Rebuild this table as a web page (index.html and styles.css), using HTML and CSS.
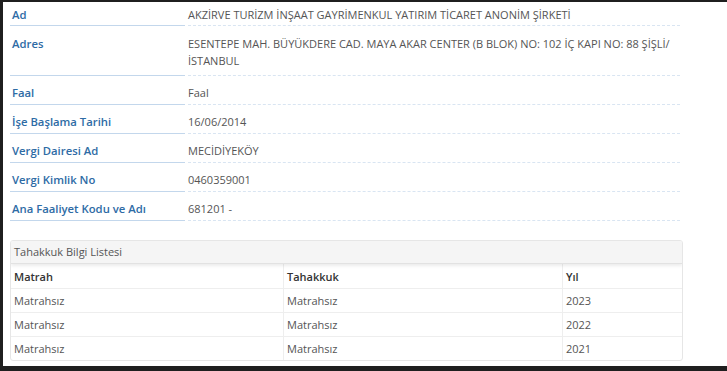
FILE: index.html
```html
<!DOCTYPE html>
<html lang="tr">
<head>
<meta charset="utf-8">
<link rel="stylesheet" href="styles.css">
</head>
<body>
<div class="frame">
  <div class="details">
    <div class="row first"><div class="label">Ad</div><div class="value">AKZİRVE TURİZM İNŞAAT GAYRİMENKUL YATIRIM TİCARET ANONİM ŞİRKETİ</div></div>
    <div class="row tall"><div class="label">Adres</div><div class="value">ESENTEPE MAH. BÜYÜKDERE CAD. MAYA AKAR CENTER (B BLOK) NO: 102 İÇ KAPI NO: 88 ŞİŞLİ/<br>İSTANBUL</div></div>
    <div class="row"><div class="label">Faal</div><div class="value">Faal</div></div>
    <div class="row"><div class="label">İşe Başlama Tarihi</div><div class="value">16/06/2014</div></div>
    <div class="row"><div class="label">Vergi Dairesi Ad</div><div class="value">MECİDİYEKÖY</div></div>
    <div class="row"><div class="label">Vergi Kimlik No</div><div class="value">0460359001</div></div>
    <div class="row"><div class="label">Ana Faaliyet Kodu ve Adı</div><div class="value">681201 -</div></div>
  </div>
  <div class="panel">
    <div class="panel-head">Tahakkuk Bilgi Listesi</div>
    <table class="grid">
      <thead>
        <tr><th class="c1">Matrah</th><th class="c2">Tahakkuk</th><th class="c3">Yıl</th></tr>
      </thead>
      <tbody>
        <tr><td>Matrahsız</td><td>Matrahsız</td><td>2023</td></tr>
        <tr><td>Matrahsız</td><td>Matrahsız</td><td>2022</td></tr>
        <tr><td>Matrahsız</td><td>Matrahsız</td><td>2021</td></tr>
      </tbody>
    </table>
  </div>
</div>
</body>
</html>
```
FILE: styles.css
```css
html, body {
  margin: 0;
  padding: 0;
  background: #1f1f1f;
  height: 371px;
  overflow: hidden;
}
.frame {
  margin: 2px 0 0 3px;
  height: 364px;
  background: #fff;
  font-family: "Open Sans", "Liberation Sans", sans-serif;
  box-sizing: border-box;
  padding: 0 43px 0 7px;
}
.details {
  display: flex;
  flex-direction: column;
}
.row {
  display: grid;
  grid-template-columns: 175px 492px;
  column-gap: 3px;
}
.label, .value {
  padding: 8px 0 3px;
  line-height: 17px;
}
.label {
  padding-left: 2px;
  font-size: 11.3px;
  font-weight: 600;
  color: #2e6ba5;
  border-bottom: 1px solid #c3d7ec;
}
.value {
  font-size: 11px;
  color: #555;
  border-bottom: 1px dashed #d9e5f2;
}
.row.first .label, .row.first .value {
  padding-top: 4px;
  padding-bottom: 2px;
}
.row.tall .label, .row.tall .value {
  padding-top: 9px;
  padding-bottom: 6px;
}
.panel {
  margin-top: 19px;
  width: 671px;
  border: 1px solid #e6e6e6;
  border-radius: 3px;
  overflow: hidden;
}
.panel-head {
  height: 22px;
  line-height: 22px;
  padding-left: 3px;
  font-size: 11px;
  color: #555;
  background: #f5f5f5;
  border-bottom: 1px solid #e2e2e2;
  box-shadow: 0 2px 3px rgba(0,0,0,0.08);
  position: relative;
}
.grid {
  width: 100%;
  border-collapse: collapse;
  font-size: 11px;
  color: #555;
}
.grid th, .grid td {
  text-align: left;
  height: 23px;
  padding: 0 3px;
  border-left: 1px solid #eee;
  border-top: 1px solid #eee;
}
.grid th:first-child, .grid td:first-child {
  border-left: none;
}
.grid thead th {
  height: 24px;
  border-top: none;
  font-weight: 600;
  color: #333;
}
.grid .c1 { width: 266px; }
.grid .c2 { width: 272px; }
```
